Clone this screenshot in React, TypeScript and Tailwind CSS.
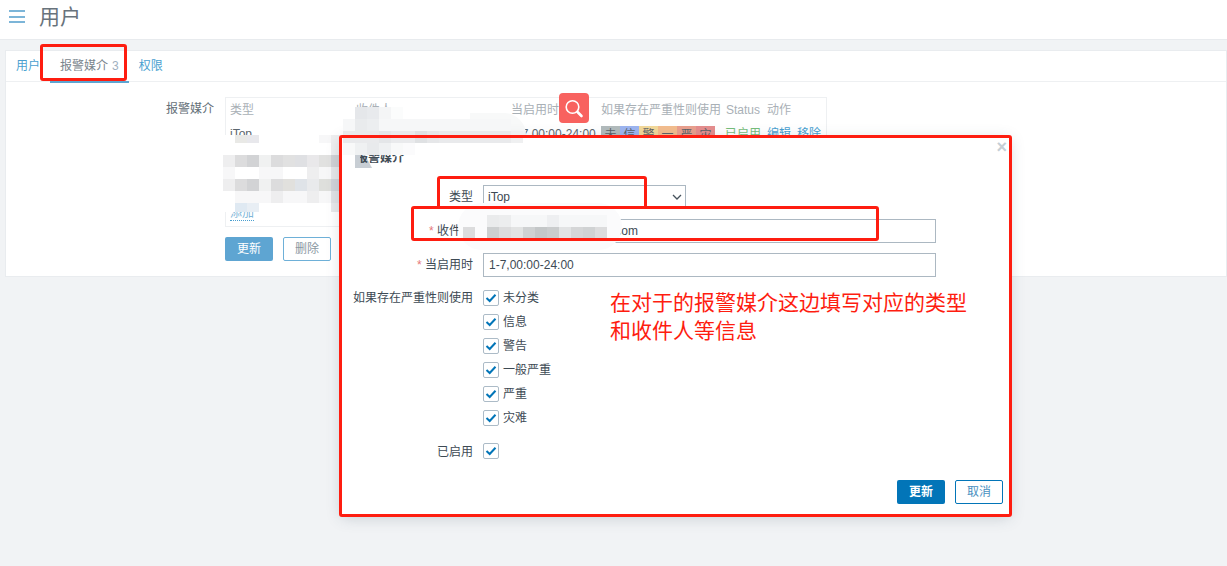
import React from "react";

const font = { fontFamily: '"Liberation Sans","Noto Sans CJK SC",sans-serif' };

function Check() {
  return (
    <span className="flex h-4 w-4 items-center justify-center rounded-[2px] border border-[#acbbc7] bg-white">
      <svg width="12" height="10" viewBox="0 0 12 10" fill="none">
        <path d="M1.5 5 L4.7 8 L10.5 1.8" stroke="#0275b8" strokeWidth="2" />
      </svg>
    </span>
  );
}

function Mosaic({ cells, cls, size = "h-3 w-3" }: { cells: string[][]; cls: string; size?: string }) {
  return (
    <div className={"absolute flex flex-col " + cls}>
      {cells.map((row, i) => (
        <div key={i} className="flex">
          {row.map((c, j) => (
            <div key={j} className={size + " " + c} />
          ))}
        </div>
      ))}
    </div>
  );
}

const L = "bg-[#f7f7f8]";
const M = "bg-[#eeeeef]";
const G = "bg-[#dcdcdd]";
const D = "bg-[#d2d3d5]";
const W = "bg-white";
const T = "bg-transparent";

const rowsLeft: string[][] = [
  [W, "bg-[#e9e9e6]", "bg-[#e8e8ec]", W, W, W, W, W, L, M],
  [W, W, W, W, W, W, W, W, W, M],
  [M, G, D, "bg-[#f0f1f1]", G, "bg-[#e1e1e1]", "bg-[#dfe0e3]", "bg-[#e9e8ea]", "bg-[#e1e1e0]", "bg-[#d0d1d4]"],
  [L, W, W, L, L, W, W, M, L, "bg-[#e5e6e8]"],
  [M, G, D, "bg-[#f0f1f1]", G, "bg-[#e1e0dd]", "bg-[#dfe3e8]", "bg-[#e9eaec]", "bg-[#dedfdc]", "bg-[#d0d3d8]"],
  [W, L, L, L, M, L, L, M, L, "bg-[#e0e2e5]"],
  [W, "bg-[#dfe9f2]", "bg-[#e8eef4]", T, T, T, T, T, T, "bg-[#e8e9eb]"],
];

const F = "bg-[#f6f7f8]";
const E = "bg-[#e9eaec]";
const topMosaic: string[][] = [
  [T, "bg-[#e5e7ea]", "bg-[#e8eaed]", "bg-[#f4f5f6]", "bg-[#fbfcfc]", T, T, T, T, T, T, T, T, T, T],
  [F, "bg-[#e9ebed]", "bg-[#eceef0]", F, F, F, F, F, F, F, F, F, F, F, T],
  [E, E, E, "bg-[#e4e6e8]", E, E, "bg-[#dfe1e3]", "bg-[#e6e7e9]", E, E, E, E, E, E, "bg-[#eff0f1]"],
  ["bg-[#f8f9f9]", "bg-[#eff1f2]", "bg-[#e8eaec]", "bg-[#eff1f2]", "bg-[#f8f9f9]", "bg-[#fbfbfc]", T, T, T, T, T, T, T, T, T],
];

const inputMosaic: string[][] = [
  [T, T, "bg-[#eaebec]", "bg-[#ecedee]", F, F, F, "bg-[#eeeff1]", F, F, F, F, T],
  [G, T, "bg-[#cdcfd0]", G, "bg-[#e2e3e3]", "bg-[#cfd1d2]", "bg-[#c4c7c8]", "bg-[#cacccd]", "bg-[#e2e3e4]", "bg-[#d5d6d7]", "bg-[#d0d2d3]", G, T],
];

const Frame = ({ cls }: { cls: string }) => (
  <div className={"pointer-events-none absolute rounded-[3px] border-[3px] border-[#fe1d10] " + cls} />
);

function Option({ label }: { label: string }) {
  return (
    <div className="flex h-6 items-center gap-[4px]">
      <Check />
      <span className="text-xs text-[#3d4a54]">{label}</span>
    </div>
  );
}

const Sev = ({ t, c }: { t: string; c: string }) => (
  <span className={"flex h-[18px] w-[19px] items-center justify-center text-xs text-[#5a6167] " + c}>{t}</span>
);

export default function App() {
  return (
    <div style={font} className="relative h-[566px] w-[1227px] overflow-hidden bg-[#f1f3f5] text-xs">
      <header className="flex h-10 items-center border-b border-[#e8ebee] bg-white pb-[6px] pl-[9px]">
        <div className="flex w-4 flex-col gap-[3.5px]">
          <span className="h-[2px] bg-[#7cb5d8]" />
          <span className="h-[2px] bg-[#7cb5d8]" />
          <span className="h-[2px] bg-[#7cb5d8]" />
        </div>
        <h1 className="ml-[14px] text-[21px] font-normal text-[#68737c]">用户</h1>
      </header>

      <main className="ml-[5px] mt-[10px] h-[227px] border border-[#e9ecef] bg-white">
        <nav className="flex h-[31px] items-center border-b border-[#eef0f2] pl-[10px]">
          <a className="text-xs text-[#4a9fd0]">用户</a>
          <span className="relative ml-[20px] flex h-[31px] items-center text-xs text-[#7a858d]">
            报警媒介<span className="ml-[4px] text-[#9fb0c0]">3</span>
            <span className="absolute -bottom-[1px] -left-[10px] -right-[10px] h-[2px] bg-[#5ea5d2]" />
          </span>
          <a className="ml-[20px] text-xs text-[#4a9fd0]">权限</a>
        </nav>
        <div className="flex pt-[15px]">
          <label className="w-[219px] pr-[11px] pt-[4px] text-right text-xs text-[#656f78]">报警媒介</label>
          <div className="flex flex-col">
            <div className="flex h-[130px] w-[602px] flex-col border border-[#eef0f2] pl-[4px] pr-[4px]">
              <div className="flex h-6 items-center text-xs text-[#a9b0b6]">
                <span className="w-[126px]">类型</span>
                <span className="w-[155px]">收件人</span>
                <span className="w-[90px] whitespace-nowrap">当启用时</span>
                <span className="w-[125px] whitespace-nowrap">如果存在严重性则使用</span>
                <span className="w-[41px]">Status</span>
                <span>动作</span>
              </div>
              <div className="mt-[2px] flex h-[20px] items-center text-xs text-[#5c666e]">
                <span className="w-[281px]">iTop</span>
                <span className="w-[90px] whitespace-nowrap">1-7,00:00-24:00</span>
                <span className="mt-[2px] flex w-[124px]">
                  <Sev t="未" c="bg-[#b2bbbc]" />
                  <Sev t="信" c="bg-[#9db5f0]" />
                  <Sev t="警" c="bg-[#f3d99a]" />
                  <Sev t="一" c="bg-[#f3bd8e]" />
                  <Sev t="严" c="bg-[#e9a08e]" />
                  <Sev t="灾" c="bg-[#e58e8e]" />
                </span>
                <span className="w-[42px] text-[#76bd7a]">已启用</span>
                <span className="w-[30px] text-[#4a9fd0]">编辑</span>
                <span className="text-[#4a9fd0]">移除</span>
              </div>
              <div className="flex-1" />
              <a className="mb-[5px] w-fit border-b border-dotted border-[#4a9fd0] text-xs leading-[14px] text-[#7fb6d8]">添加</a>
            </div>
            <div className="mt-[10px] flex gap-[4px]">
              <button className="h-6 w-[48px] rounded-[2px] bg-[#5ea5d2] text-xs text-white">更新</button>
              <button className="ml-[6px] h-6 w-[48px] rounded-[2px] border border-[#6eb0d8] bg-white text-xs text-[#8a97a2]">删除</button>
            </div>
          </div>
        </div>
      </main>

      <div className="absolute left-[223px] top-[135px] h-[77px] w-[120px] overflow-hidden">
        <Mosaic cells={rowsLeft} cls="left-0 -top-[4px]" />
      </div>
      <div className="absolute left-[470px] top-[113px] h-[30px] w-[56px] rounded-tr-[22px] bg-[#f8f9f9]" />

      <button className="absolute left-[559px] top-[93px] flex h-[30px] w-[30px] items-center justify-center rounded-[4px] bg-[#f8625f]">
        <svg width="22" height="22" viewBox="0 0 22 22" fill="none" stroke="white" strokeWidth="1.6">
          <circle cx="9.5" cy="10" r="6.3" />
          <path d="M14.5 15 L18.5 19" strokeWidth="2.6" strokeLinecap="round" />
        </svg>
      </button>

      {/* dialog */}
      <section className="absolute left-[342px] top-[138px] flex h-[377px] w-[667px] flex-col bg-white pl-[11px] shadow-[0_2px_14px_rgba(60,80,100,0.25)]">
        <span className="absolute right-[2px] top-0 text-lg font-bold leading-[18px] text-[#c5ced5]">×</span>
        <div className="absolute left-[13px] top-[17px] h-[13px] w-[17px] bg-[#c8ced4] [clip-path:polygon(0_0,60%_0,100%_100%,0_100%)]" />
        <h2 className="relative mt-[12px] h-4 pl-[3px] text-xs font-bold leading-4 text-[#3f4b54]">报警媒介</h2>
        <div className="absolute left-[13px] top-[17px] h-[13px] w-[5px] bg-[#c8ced4]" />
        <form className="mt-[19px] flex flex-col">
          <div className="flex items-center">
            <label className="w-[120px] text-right text-xs text-[#3d4a54]">类型</label>
            <div className="ml-[10px] flex h-6 w-[203px] items-center justify-between border border-[#acb8c2] pl-[4px] pr-[2px] text-xs text-[#3d4a54]">
              iTop
              <svg width="12" height="12" viewBox="0 0 12 12" fill="none" stroke="#46525c" strokeWidth="1.3"><path d="M2 4 L6 8 L10 4" /></svg>
            </div>
          </div>
          <div className="mt-[10px] flex items-center">
            <label className="w-[120px] text-right text-xs text-[#3d4a54]"><span className="text-[#e6787a]">* </span>收件人</label>
            <div className="ml-[10px] flex h-6 w-[453px] items-center border border-[#acb8c2] pl-[5px] text-xs text-[#3d4a54]">
              <span className="ml-[123px]">.com</span>
            </div>
          </div>
          <div className="mt-[10px] flex items-center">
            <label className="w-[120px] text-right text-xs text-[#3d4a54]"><span className="text-[#e6787a]">* </span>当启用时</label>
            <div className="ml-[10px] flex h-6 w-[453px] items-center border border-[#acb8c2] pl-[5px] text-xs text-[#3d4a54]">1-7,00:00-24:00</div>
          </div>
          <div className="mt-[9px] flex">
            <label className="w-[120px] pt-[4px] text-right text-xs whitespace-nowrap text-[#3d4a54]">如果存在严重性则使用</label>
            <div className="ml-[10px] flex flex-col">
              <Option label="未分类" />
              <Option label="信息" />
              <Option label="警告" />
              <Option label="一般严重" />
              <Option label="严重" />
              <Option label="灾难" />
            </div>
          </div>
          <div className="mt-[13px] flex items-start">
            <label className="w-[120px] pt-[1px] text-right text-xs leading-4 text-[#3d4a54]">已启用</label>
            <span className="ml-[10px]"><Check /></span>
          </div>
        </form>
        <div className="absolute bottom-[11px] right-[6px] flex gap-[10px]">
          <button className="h-6 w-[48px] rounded-[2px] bg-[#0275b8] text-xs font-bold text-white">更新</button>
          <button className="h-6 w-[48px] rounded-[2px] border border-[#0275b8] bg-white text-xs text-[#4a90c0]">取消</button>
        </div>
        <p className="absolute left-[268px] top-[149px] text-[21px] leading-[28px] text-[#fe1d10]" style={{ fontFamily: '"Noto Sans CJK SC",sans-serif' }}>
          在对于的报警媒介这边填写对应的类型<br />和收件人等信息
        </p>
      </section>

      <Mosaic cells={topMosaic} cls="left-[343px] top-[107px]" />

      <div className="absolute left-[458px] top-[203px] h-[47px] w-[164px] rounded-[24px] bg-[#fbfbfc]" />
      <Mosaic cells={inputMosaic} cls="left-[463px] top-[215px]" />

      <Frame cls="left-[339px] top-[135px] h-[382px] w-[673px]" />
      <Frame cls="left-[40px] top-[44px] h-[37px] w-[87px]" />
      <Frame cls="left-[437px] top-[176px] h-[33px] w-[210px]" />
      <Frame cls="left-[411px] top-[206px] h-[35px] w-[468px]" />
    </div>
  );
}
